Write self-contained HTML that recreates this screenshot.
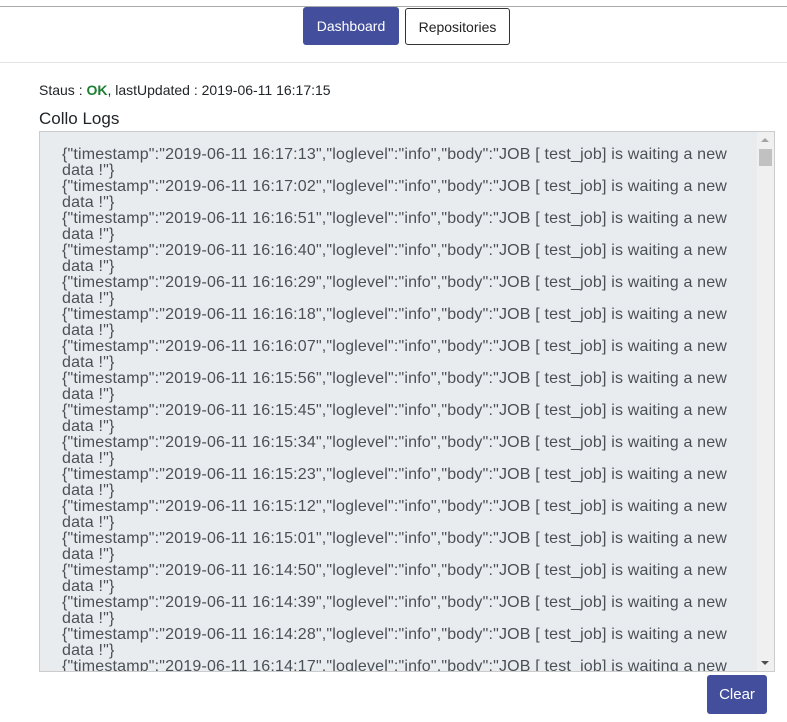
<!DOCTYPE html>
<html><head><meta charset="utf-8"><style>
body{margin:0;width:787px;height:722px;overflow:hidden;background:#fff;font-family:"Liberation Sans",sans-serif;color:#212529;position:relative}
.top{position:absolute;left:0;top:6px;width:787px;height:1px;background:#aaa}
.hr{position:absolute;left:0;top:62px;width:787px;height:1px;background:#e3e3e3}
.btn{position:absolute;box-sizing:border-box;border-radius:3px;font-size:14px;display:flex;align-items:center;justify-content:center}
.b1{left:303px;top:7px;width:96px;height:38px;background:#434f9c;color:#fff}
.b2{left:405px;top:8px;width:105px;height:37px;border:1px solid #333;color:#222}
.b3{left:707px;top:675px;width:60px;height:39px;background:#434f9c;color:#fff;font-size:15px}
.st{position:absolute;left:39px;top:82px;font-size:14px}
.h{position:absolute;left:39px;top:109px;font-size:17px}
.box{position:absolute;left:39px;top:131px;width:736px;height:541px;box-sizing:border-box;border:1px solid #ccc;background:#e9ecef;overflow:hidden}
.log{position:absolute;left:22px;top:15px;font-size:16px;line-height:16px;color:#495057;white-space:nowrap;letter-spacing:0.18px}
.sb{position:absolute;right:0;top:0;width:17px;height:100%;background:#f0f0f0}
.th{position:absolute;left:2px;top:17px;width:13px;height:17px;background:#c1c1c1}
.ar{position:absolute;left:4px;width:0;height:0;border-left:4px solid transparent;border-right:4px solid transparent}
</style></head><body>
<div class="top"></div>
<div class="btn b1">Dashboard</div>
<div class="btn b2">Repositories</div>
<div class="hr"></div>
<div class="st">Staus : <b style="color:#1e7e34">OK</b>, lastUpdated : 2019-06-11 16:17:15</div>
<div class="h">Collo Logs</div>
<div class="box"><div class="log">
{"timestamp":"2019-06-11 16:17:13","loglevel":"info","body":"JOB [ test_job] is waiting a new<br>data !"}<br>
{"timestamp":"2019-06-11 16:17:02","loglevel":"info","body":"JOB [ test_job] is waiting a new<br>data !"}<br>
{"timestamp":"2019-06-11 16:16:51","loglevel":"info","body":"JOB [ test_job] is waiting a new<br>data !"}<br>
{"timestamp":"2019-06-11 16:16:40","loglevel":"info","body":"JOB [ test_job] is waiting a new<br>data !"}<br>
{"timestamp":"2019-06-11 16:16:29","loglevel":"info","body":"JOB [ test_job] is waiting a new<br>data !"}<br>
{"timestamp":"2019-06-11 16:16:18","loglevel":"info","body":"JOB [ test_job] is waiting a new<br>data !"}<br>
{"timestamp":"2019-06-11 16:16:07","loglevel":"info","body":"JOB [ test_job] is waiting a new<br>data !"}<br>
{"timestamp":"2019-06-11 16:15:56","loglevel":"info","body":"JOB [ test_job] is waiting a new<br>data !"}<br>
{"timestamp":"2019-06-11 16:15:45","loglevel":"info","body":"JOB [ test_job] is waiting a new<br>data !"}<br>
{"timestamp":"2019-06-11 16:15:34","loglevel":"info","body":"JOB [ test_job] is waiting a new<br>data !"}<br>
{"timestamp":"2019-06-11 16:15:23","loglevel":"info","body":"JOB [ test_job] is waiting a new<br>data !"}<br>
{"timestamp":"2019-06-11 16:15:12","loglevel":"info","body":"JOB [ test_job] is waiting a new<br>data !"}<br>
{"timestamp":"2019-06-11 16:15:01","loglevel":"info","body":"JOB [ test_job] is waiting a new<br>data !"}<br>
{"timestamp":"2019-06-11 16:14:50","loglevel":"info","body":"JOB [ test_job] is waiting a new<br>data !"}<br>
{"timestamp":"2019-06-11 16:14:39","loglevel":"info","body":"JOB [ test_job] is waiting a new<br>data !"}<br>
{"timestamp":"2019-06-11 16:14:28","loglevel":"info","body":"JOB [ test_job] is waiting a new<br>data !"}<br>
{"timestamp":"2019-06-11 16:14:17","loglevel":"info","body":"JOB [ test_job] is waiting a new<br>data !"}
</div>
<div class="sb"><div class="ar" style="top:6px;border-bottom:4px solid #a3a3a3"></div><div class="th"></div><div class="ar" style="bottom:6px;border-top:4px solid #505050"></div></div>
</div>
<div class="btn b3">Clear</div>
</body></html>
